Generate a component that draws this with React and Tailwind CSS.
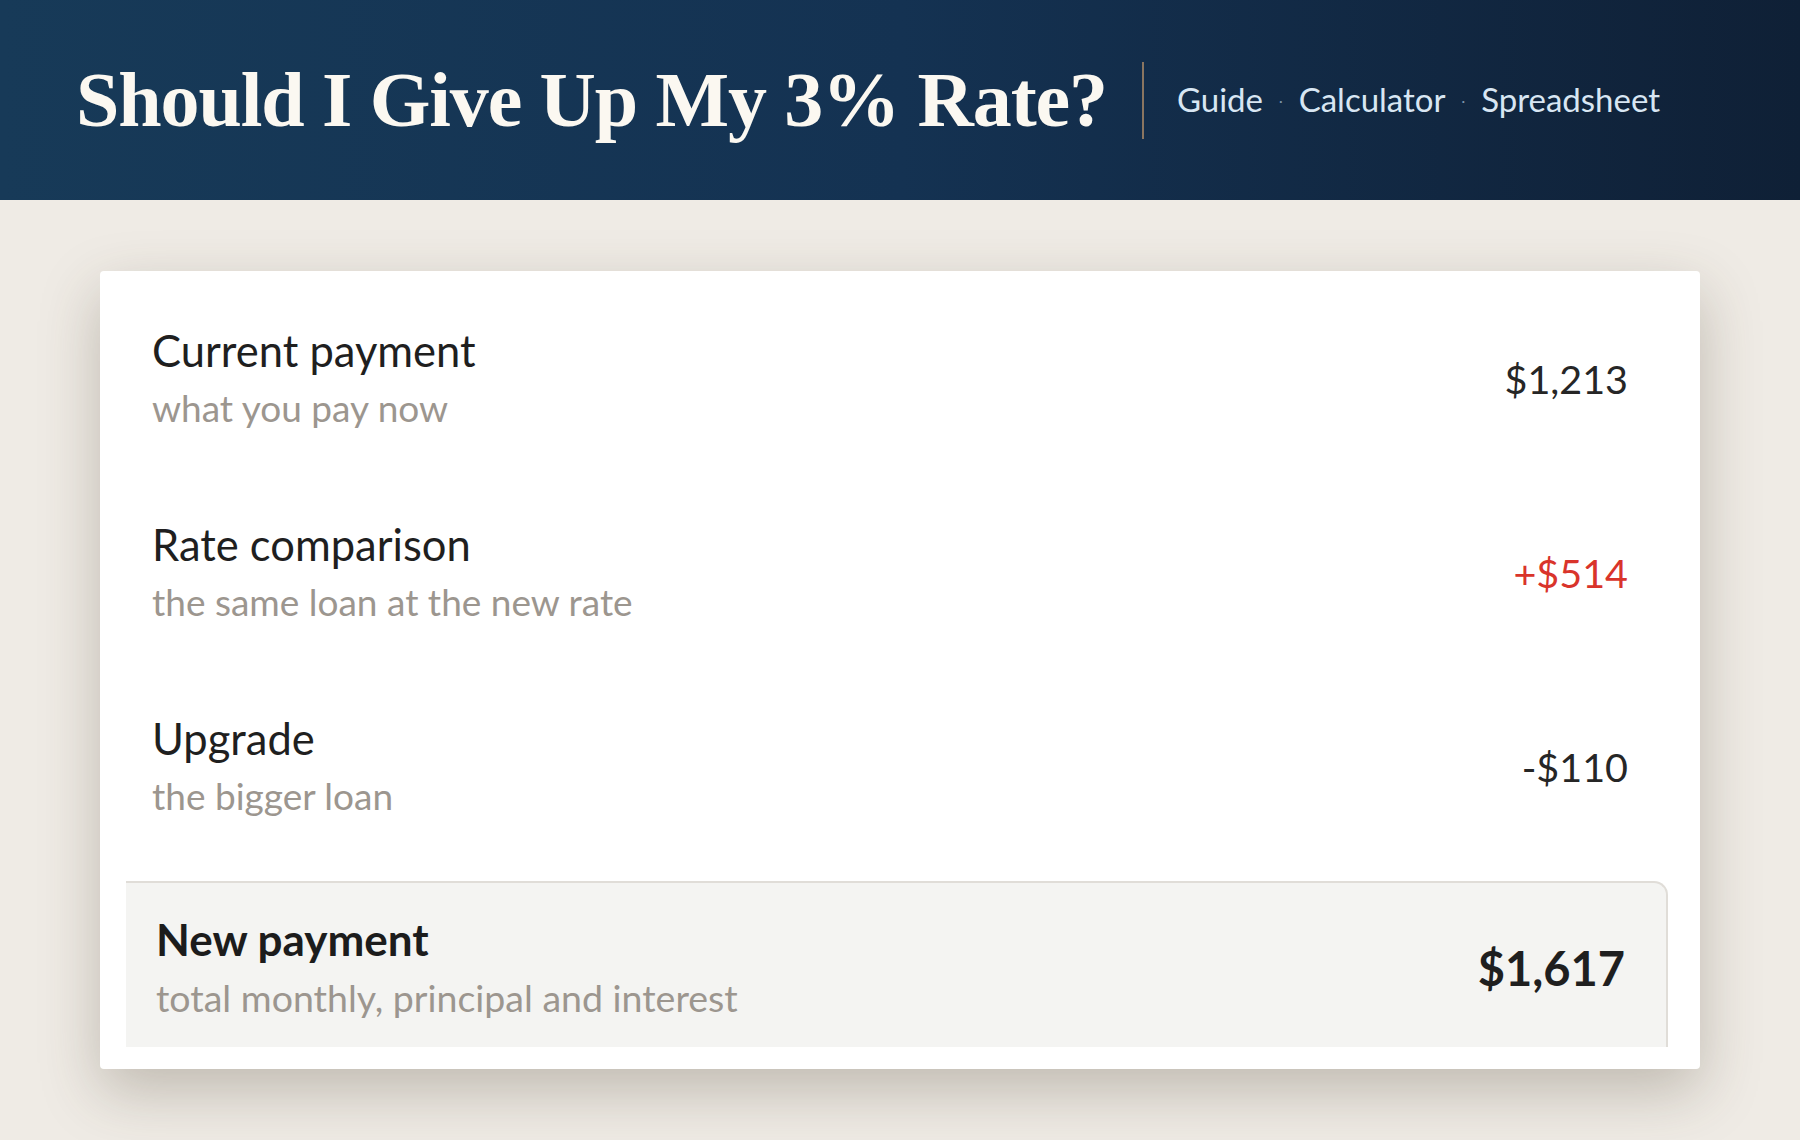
export default function App() {
  const rows = [
    { label: "Current payment", sub: "what you pay now", value: "$1,213", tone: "text-[#262626]" },
    { label: "Rate comparison", sub: "the same loan at the new rate", value: "+$514", tone: "text-[#d9342b]" },
    { label: "Upgrade", sub: "the bigger loan", value: "-$110", tone: "text-[#262626]" },
  ];

  return (
    <div className="min-h-screen bg-[#efebe5] font-['Lato','Noto_Sans',sans-serif]">
      <header className="h-[200px] bg-linear-to-r from-[#173a58] via-[#143252] to-[#0f2036] flex items-center pl-[76px]">
        <h1 className="font-['Liberation_Serif',serif] font-bold text-[78px] leading-none text-[#fbf8f1] tracking-[-1.1px]">
          Should I Give Up My 3% Rate?
        </h1>
        <div className="ml-[35px] w-[2px] h-[77px] bg-[#8a7560]" />
        <nav className="ml-[33px] flex items-center text-[33px] text-[#d8e6f3]">
          <span>Guide</span>
          <span className="mx-[16px] text-[14px] text-[#7d93aa]">·</span>
          <span>Calculator</span>
          <span className="mx-[16px] text-[14px] text-[#7d93aa]">·</span>
          <span>Spreadsheet</span>
        </nav>
      </header>

      <main className="px-[100px] pt-[71px] pb-[71px]">
        <section className="bg-white rounded-[4px] shadow-[0_22px_60px_rgba(70,58,40,0.28)] pt-[52px] pb-[22px]">
          <div className="flex flex-col gap-[82px] pl-[52px] pr-[72px]">
            {rows.map((r) => (
              <div key={r.label} className="flex items-center justify-between">
                <div className="leading-[55px]">
                  <div className="text-[43.5px] text-[#1f1f1f]">{r.label}</div>
                  <div className="mt-[2px] text-[37px] text-[#9c968f]">{r.sub}</div>
                </div>
                <div className={`text-[39.5px] ${r.tone}`}>{r.value}</div>
              </div>
            ))}
          </div>

          <div className="mt-[58px] ml-[26px] mr-[32px] bg-[#f4f4f2] border-t-2 border-r-2 border-[#e0ddd8] rounded-tr-[14px] pt-[29px] pb-[22px] pl-[30px] pr-[41px] flex items-center justify-between">
            <div className="leading-[55px]">
              <div className="text-[44px] font-bold text-[#1c1c1c]">New payment</div>
              <div className="mt-[3px] text-[37.5px] text-[#9c968f]">total monthly, principal and interest</div>
            </div>
            <div className="text-[47px] font-bold text-[#1f1f1f]">$1,617</div>
          </div>
        </section>
      </main>
    </div>
  );
}
